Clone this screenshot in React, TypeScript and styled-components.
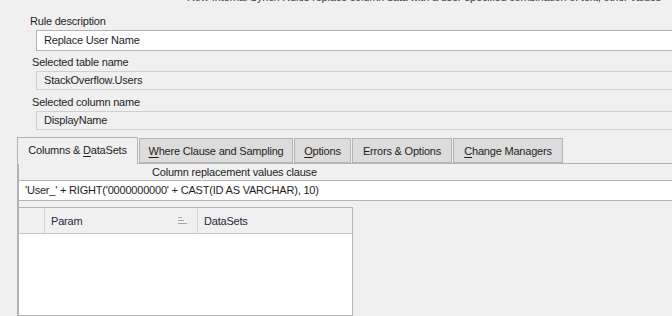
import React from "react";
import styled, {createGlobalStyle} from "styled-components";

const GlobalStyle = createGlobalStyle`
  html, body {
    margin: 0;
    padding: 0;
    background: #f0f0f0;
    overflow: hidden;
  }
  body {
    font-family: "Liberation Sans", Arial, sans-serif;
    font-size: 11px;
    letter-spacing: -0.2px;
    color: #1e1e1e;
  }
`

const StyledPage = styled.div`
  width: 720px;
  height: 316px;
  display: flex;
  flex-direction: column;
`

const StyledHint = styled.div`
  margin-top: -9px;
  padding-left: 187px;
  height: 13px;
  line-height: 13px;
  white-space: nowrap;
  color: #3c3c3c;
`

const StyledField = styled.div<{ $labelIndent: number; $gap: number }>`
  display: flex;
  flex-direction: column;
  margin-top: ${p => p.$gap}px;
  padding-left: 36px;

  & > label {
    margin-left: ${p => p.$labelIndent}px;
    height: 13px;
    line-height: 13px;
    margin-bottom: 2px;
  }
`

const StyledBox = styled.div<{ $editable?: boolean }>`
  height: ${p => p.$editable ? 19 : 17}px;
  line-height: ${p => p.$editable ? 19 : 17}px;
  padding-left: 7px;
  border: 1px solid ${p => p.$editable ? "#b4b4b4" : "#d0d0d0"};
  border-right: none;
  background: ${p => p.$editable ? "#fff" : "#f0f0f0"};
  white-space: nowrap;
`

const StyledTabControl = styled.div`
  margin-top: 7px;
  margin-left: 17px;
  display: flex;
  flex-direction: column;
  flex: 1;
`

const StyledTabStrip = styled.div`
  display: flex;
  align-items: flex-end;
  height: 26px;
  border-bottom: 1px solid #b4b4b4;
`

const StyledTab = styled.div<{ $active?: boolean; $width: number }>`
  width: ${p => p.$width}px;
  box-sizing: border-box;
  height: ${p => p.$active ? 27 : 25}px;
  margin-bottom: ${p => p.$active ? -1 : 0}px;
  margin-right: 1px;
  display: flex;
  align-items: center;
  justify-content: center;
  padding-bottom: ${p => p.$active ? 2 : 0}px;
  background: ${p => p.$active ? "#f0f0f0" : "#dcdcdc"};
  border: 1px solid #b4b4b4;
  border-bottom: ${p => p.$active ? "none" : "1px solid #b4b4b4"};
  white-space: nowrap;
  color: #1e1e1e;

  & u {
    text-decoration: underline;
    text-underline-offset: 2px;
  }
`

const StyledTabPage = styled.div`
  flex: 1;
  border-left: 2px solid #b4b4b4;
  display: flex;
  flex-direction: column;
`

const StyledClauseLabel = styled.div`
  height: 16px;
  line-height: 16px;
  padding-left: 133px;
`

const StyledClauseInput = styled.div`
  height: 19px;
  line-height: 19px;
  padding-left: 6px;
  background: #fff;
  border-top: 1px solid #b4b4b4;
  border-bottom: 1px solid #b4b4b4;
  white-space: nowrap;
`

const StyledGrid = styled.div`
  margin-top: 6px;
  width: 333px;
  flex: 1;
  border: 1px solid #b4b4b4;
  border-left: none;
  background: #fff;
  display: flex;
  flex-direction: column;
`

const StyledGridHeader = styled.div`
  display: flex;
  height: 25px;
  background: #f0f0f0;
  border-bottom: 1px solid #c8c8c8;
`

const StyledHeaderCell = styled.div<{ $width: number }>`
  width: ${p => p.$width}px;
  box-sizing: border-box;
  display: flex;
  align-items: center;
  justify-content: space-between;
  padding: 0 9px 0 6px;
  border-right: 1px solid #d4d4d4;
  color: #2a2a3a;

  &:last-child {
    border-right: none;
  }
`

const SortGlyph = () => <svg width="10" height="9" viewBox="0 0 10 9">
    <rect x="0" y="1" width="4" height="1" fill="#a8a8a8"/>
    <rect x="0" y="4" width="6" height="1" fill="#a8a8a8"/>
    <rect x="0" y="7" width="9" height="1" fill="#a8a8a8"/>
</svg>

export default function App() {
    return <>
        <GlobalStyle/>
        <StyledPage>
            <StyledHint>
                Row-Internal Synch Rules replace column data with a user-specified combination of text, other values
            </StyledHint>

            <StyledField $labelIndent={-6} $gap={11}>
                <label>Rule description</label>
                <StyledBox $editable>Replace User Name</StyledBox>
            </StyledField>

            <StyledField $labelIndent={-4} $gap={5}>
                <label>Selected table name</label>
                <StyledBox>StackOverflow.Users</StyledBox>
            </StyledField>

            <StyledField $labelIndent={-4} $gap={6}>
                <label>Selected column name</label>
                <StyledBox>DisplayName</StyledBox>
            </StyledField>

            <StyledTabControl>
                <StyledTabStrip>
                    <StyledTab $active $width={121}>Columns &amp;&nbsp;<u>D</u>ataSets</StyledTab>
                    <StyledTab $width={154}><u>W</u>here Clause and Sampling</StyledTab>
                    <StyledTab $width={57}><u>O</u>ptions</StyledTab>
                    <StyledTab $width={100}>Errors &amp; Options</StyledTab>
                    <StyledTab $width={110}><u>C</u>hange Managers</StyledTab>
                </StyledTabStrip>
                <StyledTabPage>
                    <StyledClauseLabel>Column replacement values clause</StyledClauseLabel>
                    <StyledClauseInput>'User_' + RIGHT('0000000000' + CAST(ID AS VARCHAR), 10)</StyledClauseInput>
                    <StyledGrid>
                        <StyledGridHeader>
                            <StyledHeaderCell $width={26}/>
                            <StyledHeaderCell $width={153}>Param<SortGlyph/></StyledHeaderCell>
                            <StyledHeaderCell $width={154}>DataSets</StyledHeaderCell>
                        </StyledGridHeader>
                    </StyledGrid>
                </StyledTabPage>
            </StyledTabControl>
        </StyledPage>
    </>
}
